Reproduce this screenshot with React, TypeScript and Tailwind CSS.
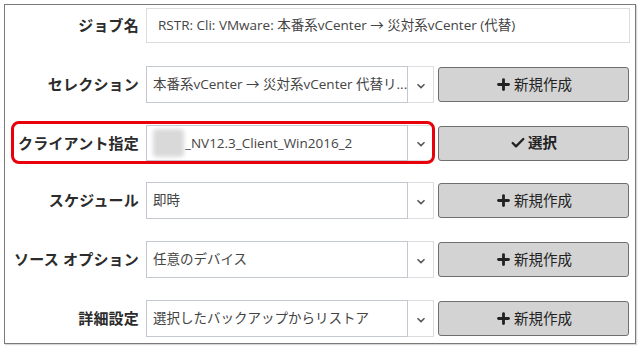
import { Plus, Check } from 'lucide-react';

const font = "font-['Open_Sans','Noto_Sans_CJK_JP',sans-serif]";

const Chevron = () => (
  <svg width="10" height="6" viewBox="0 0 10 6" className="mt-[2px] text-[#555]">
    <path d="M1.5 1.2 L5 4.6 L8.5 1.2" fill="none" stroke="currentColor" strokeWidth="1.5" />
  </svg>
);

const Label = ({ children }: { children: string }) => (
  <div className="w-[134px] shrink-0 text-right text-[15px] font-bold text-[#2b2b2b] whitespace-nowrap tracking-[0.2px]">
    {children}
  </div>
);

const SelectBox = ({ children }: { children: React.ReactNode }) => (
  <div className="flex h-full w-[288px] shrink-0 bg-white">
    <div className="flex h-full w-[262px] items-center overflow-hidden whitespace-nowrap border border-[#c3c8d1] pl-[6px] text-[13.5px] text-[#444]">
      {children}
    </div>
    <div className="flex h-full w-[26px] items-center justify-center border border-l-0 border-[#dddddd]">
      <Chevron />
    </div>
  </div>
);

const ActionButton = ({ check }: { check?: boolean }) => (
  <button className="ml-[4px] flex h-[35px] w-[191px] items-center justify-center gap-[2px] rounded-[3px] border border-[#6f6f6f] bg-[#d3d3d3] text-[14.5px] text-[#222]">
    {check ? (
      <>
        <Check className="h-[16px] w-[16px]" strokeWidth={3.5} />
        <span className="font-bold">選択</span>
      </>
    ) : (
      <>
        <Plus className="h-[17px] w-[17px]" strokeWidth={4} />
        <span>新規作成</span>
      </>
    )}
  </button>
);

export default function App() {
  return (
    <div className={`h-[349px] w-[640px] bg-white pl-[4px] pt-[4px] ${font}`}>
      <div className="relative h-[340px] w-[632px] border border-[#7a7a7a] shadow-[1px_1px_1px_rgba(0,0,0,0.15)]">
        <div className="flex flex-col">
          <div className="mt-[3px] flex h-[35px] items-center gap-[7px]">
            <Label>ジョブ名</Label>
            <div className="flex h-full w-[484px] items-center border border-[#dcdcdc] pl-[11px] text-[13.5px] text-[#444]">
              RSTR: Cli: VMware: 本番系vCenter → 災対系vCenter (代替)
            </div>
          </div>

          <div className="mt-[23px] flex h-[37px] items-center gap-[7px]">
            <Label>セレクション</Label>
            <div className="flex h-full items-center">
              <SelectBox>本番系vCenter → 災対系vCenter 代替リ...</SelectBox>
              <ActionButton />
            </div>
          </div>

          <div className="mt-[22px] flex h-[36px] items-center gap-[7px]">
            <Label>クライアント指定</Label>
            <div className="flex h-full items-center">
              <SelectBox>
                <span className="mr-[1px] h-[28px] w-[31px] shrink-0 rounded-[4px] bg-[#d9d9d9] blur-[2px]" />
                <span>_NV12.3_Client_Win2016_2</span>
              </SelectBox>
              <ActionButton check />
            </div>
          </div>

          <div className="mt-[21px] flex h-[37px] items-center gap-[7px]">
            <Label>スケジュール</Label>
            <div className="flex h-full items-center">
              <SelectBox>即時</SelectBox>
              <ActionButton />
            </div>
          </div>

          <div className="mt-[22px] flex h-[37px] items-center gap-[7px]">
            <Label>ソース オプション</Label>
            <div className="flex h-full items-center">
              <SelectBox>任意のデバイス</SelectBox>
              <ActionButton />
            </div>
          </div>

          <div className="mt-[22px] flex h-[37px] items-center gap-[7px]">
            <Label>詳細設定</Label>
            <div className="flex h-full items-center">
              <SelectBox>選択したバックアップからリストア</SelectBox>
              <ActionButton />
            </div>
          </div>
        </div>

        <div className="pointer-events-none absolute left-[6px] top-[116px] h-[43px] w-[424px] rounded-[8px] border-[3px] border-[#e8000b]" />
      </div>
    </div>
  );
}
